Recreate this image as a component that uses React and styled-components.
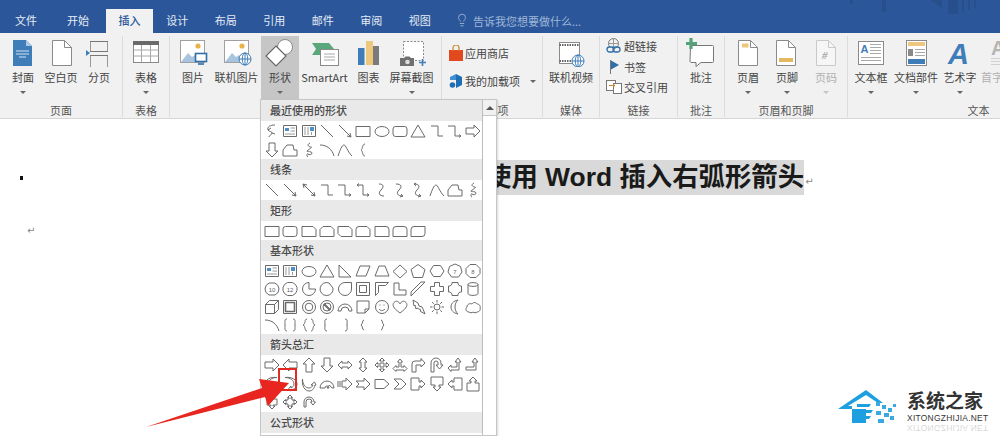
import styled, { createGlobalStyle } from 'styled-components';
import { Lightbulb } from 'lucide-react';

const GlobalStyle = createGlobalStyle`
  html, body { margin: 0; padding: 0; background: #fff; }
  body { font-family: "Liberation Sans", "Noto Sans CJK SC", sans-serif; }
`;

const cjk = `"Noto Sans CJK SC", "Liberation Sans", sans-serif`;

const Page = styled.div`
  position: relative;
  width: 1000px;
  height: 436px;
  overflow: hidden;
  display: flex;
  flex-direction: column;
  font-family: ${cjk};
`;

// title bar + tabs
const TabBar = styled.div`
  height: 33px;
  flex: none;
  display: flex;
  align-items: flex-end;
  padding-left: 2px;
  background: #2b579a;
  box-sizing: border-box;
`;

const Tab = styled.div`
  width: ${p => p.$w || 48.5}px;
  height: 24px;
  line-height: 22px;
  text-align: center;
  font-size: 11px;
  color: ${p => (p.$active ? '#2b579a' : '#e6ecf5')};
  background: ${p => (p.$active ? '#f1f1f1' : 'transparent')};
  font-weight: ${p => (p.$active ? 500 : 400)};
`;

const TellMe = styled.div`
  display: flex;
  align-items: center;
  gap: 4px;
  height: 24px;
  margin-left: 11px;
  font-size: 11px;
  color: #9fb6d8;
  svg { display: block; margin-bottom: 2px; }
`;

const BarArt = styled.svg`
  margin-left: auto;
  align-self: flex-start;
  display: block;
`;

// ribbon
const Ribbon = styled.div`
  height: 86px;
  flex: none;
  display: flex;
  background: #f1f1f1;
  border-bottom: 1px solid #d6d6d6;
  box-sizing: border-box;
`;

const Group = styled.div`
  flex: none;
  box-sizing: border-box;
  width: ${p => p.$w}px;
  height: 81px;
  margin-top: 3px;
  display: flex;
  flex-direction: column;
  border-right: 1px solid #dcdcdc;
`;

const Items = styled.div`
  height: 63px;
  display: flex;
  padding-left: ${p => p.$pad || 0}px;
`;

const GroupLabel = styled.div`
  margin-top: ${p => (p.$pushed ? 'auto' : '4px')};
  height: 14px;
  line-height: 14px;
  font-size: 11px;
  text-align: center;
  color: #555;
`;

const BigButton = styled.div`
  flex: none;
  width: ${p => p.$w}px;
  height: 63px;
  box-sizing: border-box;
  padding-top: 1px;
  display: flex;
  flex-direction: column;
  align-items: center;
  background: ${p => (p.$on ? '#c6c6c6' : 'transparent')};
  color: ${p => (p.$off ? '#b0b0b0' : '#444')};
  font-size: 11px;
  white-space: nowrap;
  span { line-height: 16px; height: 16px; margin-top: 2px; }
`;

const Caret = styled.i`
  display: block;
  width: 0;
  height: 0;
  margin-top: 6px;
  border: 3px solid transparent;
  border-top: 3px solid ${p => (p.$off ? '#c4c4c4' : '#666')};
  border-bottom: 0;
`;

const Icon = styled.svg`
  display: block;
  flex: none;
  width: 30px;
  height: 30px;
`;

const SmallColumn = styled.div`
  display: flex;
  flex-direction: column;
  padding: ${p => p.$top}px 0 0 ${p => p.$left}px;
`;

const SmallButton = styled.div`
  height: ${p => p.$h}px;
  display: flex;
  align-items: center;
  gap: 2px;
  font-size: 11px;
  color: #444;
  white-space: nowrap;
  svg { display: block; flex: none; }
  i { margin: 0 0 0 8px; }
`;

// document
const Doc = styled.div`
  flex: 1;
  background: #fff;
  padding-top: 41px;
`;

const TitleRow = styled.div`
  height: 35px;
  display: flex;
  align-items: center;
  padding-left: 20px;
`;

const Bullet = styled.i`
  width: 3px;
  height: 4px;
  background: #111;
  margin-right: 462px;
`;

const Title = styled.div`
  height: 35px;
  background: #d9d9d9;
  font: bold 26.4px/35px "Liberation Sans", "Noto Sans CJK SC", sans-serif;
  color: #1a1a1a;
  white-space: nowrap;
`;

const ReturnMark = styled.span`
  font-size: 10px;
  color: #888;
  font-family: "DejaVu Sans", sans-serif;
  margin-left: ${p => p.$left || 0}px;
`;

const TitleMark = styled(ReturnMark)`
  margin-top: 8px;
`;

const EmptyPara = styled.div`
  margin-top: 25px;
  padding-left: 27px;
  line-height: 14px;
`;

// shapes menu
const Menu = styled.div`
  position: absolute;
  left: 260px;
  top: 99px;
  width: 237px;
  height: 337px;
  box-sizing: border-box;
  display: flex;
  background: #fff;
  border: 1px solid #c6c6c6;
  box-shadow: 1px 1px 2px rgba(0, 0, 0, 0.15);
`;

const Gallery = styled.div`
  width: 221px;
  flex: none;
  border-right: 1px solid #bdbdbd;
`;

const Scroll = styled.div`
  flex: 1;
`;

const ScrollUp = styled.div`
  height: 15px;
  display: flex;
  align-items: center;
  justify-content: center;
  background: #f1f1f1;
  border-bottom: 1px solid #c6c6c6;
  &::before {
    content: '';
    border: 4px solid transparent;
    border-bottom: 4px solid #555;
    border-top: 0;
  }
`;

const SectionHead = styled.div`
  height: 21px;
  line-height: 21px;
  padding-left: 9px;
  background: #e9e9e9;
  font-size: 11px;
  font-weight: 500;
  color: #4a4a4a;
`;

const ShapeGrid = styled.div`
  display: grid;
  grid-template-columns: repeat(12, 18.3px);
  grid-auto-rows: ${p => p.$row || 18.5}px;
  padding: 1px 0 0 2px;
`;

const ShapeIcon = styled.svg`
  display: block;
  width: 16px;
  height: 16px;
  margin: 1px;
  fill: none;
  stroke: #6a6a6a;
  stroke-width: 1;
  stroke-linejoin: round;
`;

const RedBox = styled.div`
  position: absolute;
  left: 278px;
  top: 368px;
  width: 19px;
  height: 23px;
  box-sizing: border-box;
  border: 2px solid #e02a22;
`;

const RedArrow = styled.svg`
  position: absolute;
  left: 140px;
  top: 370px;
  display: block;
`;

// watermark
const Mark = styled.div`
  position: absolute;
  left: 838px;
  top: 388px;
  display: flex;
  gap: 5px;
  svg { display: block; flex: none; }
`;

const MarkText = styled.div`
  display: flex;
  flex-direction: column;
`;

const MarkName = styled.div`
  font-size: 19px;
  line-height: 24px;
  font-weight: 700;
  color: #333;
`;

const MarkUrl = styled.div`
  font: 8.4px/11px "Liberation Sans", sans-serif;
  letter-spacing: 0.3px;
  color: #333;
  white-space: nowrap;
  margin-top: 1px;
`;

const MarkEcho = styled(MarkUrl)`
  margin-top: -2px;
  transform: scaleY(-1);
  opacity: 0.2;
`;

/* ---- ribbon icons, 30x30 ---- */
const doc = 'M.5.5h12l7 7v18H.5z';

const CoverIcon = () => (
  <Icon viewBox="0 0 30 30">
    <path d="M5 3h13l6 6v20H5z" fill="#3f7db8" />
    <path d="M18 3l6 6h-6z" fill="#a9c9e6" />
    <path d="M8 14h13M8 17h13M11 20h7" stroke="#d5e4f2" fill="none" />
  </Icon>
);

const DocSheet = ({ x = 6, children, stroke = '#8a8a8a', fill = '#fff' }) => (
  <Icon viewBox="0 0 30 30">
    <g transform={`translate(${x} 3)`}>
      <path d={doc} fill={fill} stroke={stroke} />
      <path d="M12.5.5v7h7" fill="none" stroke={stroke} />
      {children}
    </g>
  </Icon>
);

const BlankIcon = () => <DocSheet />;

const BreakIcon = () => (
  <Icon viewBox="0 0 30 30">
    <path d="M6.5 4v10M23.5 4v10M6.5 18v12M23.5 18v12" stroke="#999" fill="none" />
    <path d="M6 4.5h18M6 14.5h18M6 18.5h18" stroke="#777" fill="none" />
    <path d="M2 13l4 3-4 3z" fill="#3f7db8" />
  </Icon>
);

const TableIcon = () => (
  <Icon viewBox="0 0 30 30">
    <rect x="2.5" y="4.5" width="25" height="21" fill="#fff" stroke="#8a8a8a" />
    <rect x="2" y="4" width="26" height="4" fill="#6a6a6a" />
    <path d="M2.5 13h25M2.5 19h25M10.5 8v17M19.5 8v17" stroke="#a8a8a8" fill="none" />
  </Icon>
);

const PictureBase = ({ children }) => (
  <Icon viewBox="0 0 30 30">
    <rect x="2.5" y="3.5" width="24" height="22" fill="#fff" stroke="#a0a0a0" />
    <circle cx="20" cy="9" r="2.6" fill="#eab34a" />
    <path d="M3 25l7-9 4 4 3-2 5 7z" fill="#a9c4de" />
    {children}
  </Icon>
);

const PictureIcon = () => (
  <PictureBase>
    <rect x="17.5" y="16.5" width="11" height="8" fill="#fff" stroke="#2f6ea8" strokeWidth="1.6" />
    <path d="M20 27h6" stroke="#2f6ea8" strokeWidth="1.6" />
  </PictureBase>
);

const Globe = ({ cx, cy, r }) => (
  <g fill="#fff" stroke="#3f7db8">
    <circle cx={cx} cy={cy} r={r} />
    <ellipse cx={cx} cy={cy} rx={r / 2.2} ry={r} fill="none" />
    <path d={`M${cx - r} ${cy}h${r * 2}M${cx} ${cy - r}v${r * 2}`} fill="none" />
  </g>
);

const OnlinePictureIcon = () => (
  <PictureBase>
    <Globe cx={23} cy={22} r={6} />
  </PictureBase>
);

const ShapesIcon = () => (
  <Icon viewBox="0 0 30 30">
    <circle cx="20" cy="10" r="7.5" fill="#fff" stroke="#8a8a8a" />
    <path d="M11 9l10 10-10 10L1 19z" fill="#fff" stroke="#666" strokeWidth="1.2" />
  </Icon>
);

const SmartArtIcon = () => (
  <Icon viewBox="0 0 30 30">
    <path d="M2 6h17l5 6-5 6H2l4-6z" fill="#5aa77b" />
    <rect x="10.5" y="12.5" width="18" height="16" fill="#fff" stroke="#8a8a8a" />
    <path d="M14 17h11M14 20h11M14 23h11" stroke="#a8a8a8" />
  </Icon>
);

const ChartIcon = () => (
  <Icon viewBox="0 0 30 30">
    <rect x="4" y="11" width="6.5" height="17" fill="#3f7db8" />
    <rect x="12" y="4" width="7" height="24" fill="#edc77b" />
    <rect x="19" y="9" width="6" height="19" fill="#7b7b7b" />
  </Icon>
);

const ScreenshotIcon = () => (
  <Icon viewBox="0 0 30 30">
    <rect x="6.5" y="4.5" width="20" height="19" fill="#fff" stroke="#8a8a8a" strokeDasharray="2 1.5" />
    <path d="M3 21h4l1.5-1.5h4L14 21h3v8H3z" fill="#6f6f6f" />
    <circle cx="10.5" cy="25" r="2.3" fill="#ddd" />
    <path d="M25.5 22v7M22 25.5h7" stroke="#3f7db8" strokeWidth="1.6" />
  </Icon>
);

const VideoIcon = () => (
  <Icon viewBox="0 0 30 30">
    <rect x="3.5" y="5.5" width="20" height="21" fill="#fff" stroke="#8a8a8a" />
    <path d="M3.5 8h20M3.5 24h20" stroke="#666" strokeWidth="2" strokeDasharray="1.5 1" />
    <Globe cx={22} cy={24} r={6} />
  </Icon>
);

const CommentIcon = () => (
  <Icon viewBox="0 0 30 30">
    <path d="M4.5 8.5h22a1 1 0 0 1 1 1v15a1 1 0 0 1-1 1H15l-5 4v-4H5a3 3 0 0 1-1-1z" fill="#fff" stroke="#777" />
    <path d="M5 1v11M0 6.5h11" stroke="#55a27a" strokeWidth="3.2" />
  </Icon>
);

const HeaderIcon = () => (
  <DocSheet x={5}>
    <rect x="4" y="3.5" width="6.5" height="4" fill="#edc77b" />
  </DocSheet>
);

const FooterIcon = () => (
  <DocSheet x={4}>
    <rect x="3" y="18" width="14" height="4" fill="#e3b860" />
  </DocSheet>
);

const PageNumberIcon = () => (
  <DocSheet x={5} stroke="#c9c9c9" fill="#f6f6f6">
    <text x="6" y="19" fontFamily="Liberation Serif" fontStyle="italic" fontWeight="700" fontSize="11" fill="#a8a8a8">#</text>
  </DocSheet>
);

const TextBoxIcon = () => (
  <Icon viewBox="0 0 30 30">
    <rect x="2.5" y="4.5" width="25" height="23" fill="#fff" stroke="#8a8a8a" />
    <text x="4.5" y="16" fontFamily="Liberation Sans" fontWeight="700" fontSize="11" fill="#3f7db8">A</text>
    <path d="M14 7.5h11M14 10.5h11M14 13.5h11M14 16.5h11M5 20.5h20M5 23.5h20" stroke="#a8a8a8" />
  </Icon>
);

const DocPartsIcon = () => (
  <Icon viewBox="0 0 30 30">
    <rect x="5.5" y="3.5" width="20" height="25" fill="#fff" stroke="#8a8a8a" />
    <rect x="7" y="5" width="17" height="4" fill="#edc77b" />
    <rect x="7" y="12" width="5" height="7" fill="#8a8a8a" />
    <path d="M14 12.5h10M14 15.5h10M14 18.5h10" stroke="#a8a8a8" />
    <rect x="7" y="22" width="17" height="5" fill="#3f7db8" />
  </Icon>
);

const WordArtIcon = () => (
  <Icon viewBox="0 0 30 30">
    <text x="3" y="27" fontFamily="Liberation Sans" fontStyle="italic" fontWeight="700" fontSize="29" fill="#3f7db8">A</text>
  </Icon>
);

const DropCapIcon = () => (
  <Icon viewBox="0 0 30 30">
    <text x="3" y="18" fontFamily="Liberation Sans" fontWeight="700" fontSize="20" fill="#b5b5b5">A</text>
    <path d="M3 21.5h24M3 24.5h24M3 27.5h24" stroke="#d0d0d0" />
  </Icon>
);

const StoreIcon = () => (
  <svg width="14" height="16" viewBox="0 0 14 16">
    <path d="M0 5h14v11H0z" fill="#e2491f" />
    <path d="M4 6V3a3 3 0 0 1 6 0v3" fill="none" stroke="#c9892e" strokeWidth="1.2" />
  </svg>
);

const AddinIcon = () => (
  <svg width="14" height="16" viewBox="0 0 14 16">
    <path d="M7 1l6 3v8l-6 3z" fill="#1f6db5" />
    <path d="M7 1L1 4v3h6z" fill="#3f8fd2" />
    <circle cx="3.5" cy="12" r="2.8" fill="#1f6db5" />
  </svg>
);

const LinkIcon = () => (
  <svg width="16" height="16" viewBox="0 0 16 16">
    <circle cx="7.5" cy="5.5" r="5" fill="none" stroke="#777" />
    <path d="M2.5 5.5h10M7.5.5v10" stroke="#999" />
    <rect x="1" y="9" width="7" height="5" rx="2.5" fill="#f1f1f1" stroke="#2f6ea8" strokeWidth="1.3" />
    <rect x="7" y="9" width="7" height="5" rx="2.5" fill="none" stroke="#2f6ea8" strokeWidth="1.3" />
  </svg>
);

const FlagIcon = () => (
  <svg width="16" height="16" viewBox="0 0 16 16">
    <path d="M4.5 1v14" stroke="#777" />
    <path d="M5 1.5l8 4.5-8 4.5z" fill="#2f6ea8" />
  </svg>
);

const CrossRefIcon = () => (
  <svg width="16" height="16" viewBox="0 0 16 16">
    <rect x=".5" y="1.5" width="9" height="10" fill="#fff" stroke="#777" />
    <rect x="7.5" y="4.5" width="8" height="10" fill="#fff" stroke="#777" />
    <path d="M3 6.5h6M7 5l2 1.5L7 8" stroke="#c9892e" fill="none" />
  </svg>
);

/* ---- gallery shapes, 16x16 ---- */
const p = (d, t) => <path d={d} transform={t} />;
const rot = a => `rotate(${a} 8 8)`;
const flip = 'matrix(-1 0 0 1 16 0)';
const numbered = (d, n) => (
  <>
    <path d={d} />
    <text x="8" y="10.5" textAnchor="middle" fontSize="6" fontFamily="Liberation Sans" fill="#666" stroke="none">{n}</text>
  </>
);

const ARROW = 'M1 5h8V2l6 6-6 6v-3H1z';
const CALLOUT = 'M1 2h8v4h2V4l4 4-4 4v-2H9v4H1z';
const CURVED = 'M13 1.5C7 1.5 4 5 4 8c0 2 1 3 3 4v-2l3 3.5L7 15v-1C3 13 1 11 1 8c0-4 5-7.5 12-6.5z';
const SWIRL = 'M3 13V8a5 5 0 0 1 10 0h1.5L12 11 9.5 8H11a3 3 0 0 0-6 0v5z';

const S = {
  hook: p('M11 2C6 2 3 4 4 7c1 2 4 1 4 3s-3 2-3 4M4 7l3-2M8 10l3 1'),
  textbox: (
    <>
      <rect x="1.5" y="2.5" width="13" height="11" />
      <path d="M3 5h4v3H3z" fill="#4f8ec9" stroke="none" />
      <path d="M8.5 5h4.5M8.5 8h4.5M3 11h10" stroke="#9a9a9a" />
    </>
  ),
  vtextbox: (
    <>
      <rect x="1.5" y="2.5" width="13" height="11" />
      <path d="M9 4h4v4H9z" fill="#4f8ec9" stroke="none" />
      <path d="M4 4v8M7 4v8M10.5 9v3" stroke="#9a9a9a" />
    </>
  ),
  line: p('M2 2l12 12'),
  lineArrow: p('M2 2l12 12M14 14l-1-4M14 14l-4-1'),
  lineDouble: p('M2 2l12 12M14 14l-1-4M14 14l-4-1M2 2l1 4M2 2l4 1'),
  rect: <rect x="1" y="3.5" width="14" height="10" />,
  oval: <ellipse cx="8" cy="8.5" rx="7" ry="5" />,
  round: <rect x="1" y="3.5" width="14" height="10" rx="2.5" />,
  tri: p('M8 2l7 12H1z'),
  elbow: p('M2 3h7v10h5'),
  elbowArrow: p('M1 3h7v10h6M14 13l-2-1.5M14 13l-2 1.5'),
  elbowDouble: p('M2 3h6v10h6M14 13l-2-1.5M14 13l-2 1.5M2 3l2-1.5M2 3l2 1.5'),
  right: p(ARROW),
  left: p(ARROW, rot(180)),
  up: p(ARROW, rot(-90)),
  down: p(ARROW, rot(90)),
  freeform: p('M1 14V8l4-5h6l1 5h3v6z'),
  scribble: p('M9 1C5 3 8 5 10 5S7 8 6 9s5 0 5 2-3 2-4 1-2 2 0 3'),
  arc: p('M1 3c7 0 12 4 14 11'),
  curve: p('M1 14C3 8 5 3 7 3s3 6 8 11'),
  brace: p('M10 2C7 2 8 7 6 8c2 1 1 6 4 6'),
  curveConn: p('M5 2c5 0 5 3 2 6s-2 6 3 6'),
  curveArrow: p('M4 2c6 0 6 3 3 6s-2 6 4 6M11 14l-2-2M11 14l-3 1'),
  curveDouble: p('M4 2c6 0 6 3 3 6s-2 6 4 6M11 14l-2-2M11 14l-3 1M4 2l2-1M4 2l2 2'),
  snip1: p('M1 3.5h11l3 3v7H1z'),
  snip2: p('M4 3.5h8l3 3v7H1v-7z'),
  snipDiag: p('M1 3.5h11l3 3v7H4l-3-3z'),
  roundSnip: p('M4 3.5h8l3 3v7H1v-7a3 3 0 0 1 3-3z'),
  round1: p('M1 3.5h11a3 3 0 0 1 3 3v7H1z'),
  round2: p('M4 3.5h8a3 3 0 0 1 3 3v7H1v-7a3 3 0 0 1 3-3z'),
  roundDiag: p('M4 3.5h11v7a3 3 0 0 1-3 3H1v-7a3 3 0 0 1 3-3z'),
  rtTri: p('M2 2l12 12H2z'),
  para: p('M5 3h10l-4 10H1z'),
  trap: p('M5 3h6l4 10H1z'),
  diamond: p('M8 2l7 6.5L8 15 1 8.5z'),
  penta: p('M8 1.5l7 5-2.5 8h-9L1 6.5z'),
  hexa: p('M4.5 2.5h7L15 8l-3.5 5.5h-7L1 8z'),
  hepta: numbered('M8 1l5.5 2.5L15 9l-3.5 5h-7L1 9l1.500-5.500z', '7'),
  octa: numbered('M5 1.5h6L15 5.500v5L11 14.500H5L1 10.500v-5z', '8'),
  deca: numbered('M5 2h6l3 2.500L15 8l-1 3.500L11 14H5l-3-2.500L1 8l1-3.500z', '10'),
  dodeca: numbered('M5.500 1.500h5l3 2 1.500 3v3l-1.500 3-3 2h-5l-3-2L1 9.500v-3l1.500-3z', '12'),
  pie: p('M8 1.500A6.500 6.500 0 1 0 14.500 8H8z'),
  chord: p('M10 2a6.500 6.500 0 1 0 4 5L10 2z'),
  tear: p('M14.500 1.500v6.500A6.500 6.500 0 1 1 8 1.500z'),
  frame: (
    <>
      <rect x="1.5" y="1.5" width="13" height="13" />
      <rect x="4.5" y="4.5" width="7" height="7" />
    </>
  ),
  halfFrame: p('M1.500 1.500h13l-3 3h-7v7l-3 3z'),
  ell: p('M2 2h5v7h7v5H2z'),
  stripe: p('M1 15l0-4L11 1h4z'),
  cross: p('M5.500 1.500h5v4h4v5h-4v4h-5v-4h-4v-5h4z'),
  plaque: p('M5 1.500h6a3 3 0 0 0 3.500 3.500v6A3 3 0 0 0 11 14.500H5A3 3 0 0 0 1.500 11V5A3 3 0 0 0 5 1.500z'),
  can: p('M3 3.500c0-2.500 10-2.500 10 0v9c0 2.500-10 2.500-10 0zM3 3.500c0 2.500 10 2.500 10 0'),
  cube: p('M1.500 5.500l4-4h9v9l-4 4h-9zM1.500 5.500h9v9M10.500 5.500l4-4'),
  bevel: (
    <>
      <rect x="1.5" y="1.5" width="13" height="13" />
      <rect x="3.5" y="3.5" width="9" height="9" strokeWidth="1.6" />
    </>
  ),
  donut: (
    <>
      <circle cx="8" cy="8" r="6.5" />
      <circle cx="8" cy="8" r="3.8" />
    </>
  ),
  noSign: (
    <>
      <circle cx="8" cy="8" r="6.5" />
      <circle cx="8" cy="8" r="4" />
      <path d="M5 5l6 6" strokeWidth="2" />
    </>
  ),
  blockArc: p('M1 12a7 7 0 0 1 14 0h-3a4 4 0 0 0-8 0z'),
  folded: p('M2 2h12v8l-4 4H2zM14 10h-4v4'),
  smile: (
    <>
      <circle cx="8" cy="8" r="6.5" />
      <path d="M5 10c2 2 4 2 6 0M5.500 6h1M9.500 6h1" />
    </>
  ),
  heart: p('M8 14C1 9 0 6 2 3.500s5-1 6 1.500c1-2.500 4-4 6-1.500s1 5.500-6 10.500z'),
  bolt: p('M3 1l5 3 1 3 3 1 1 2 2 5-5-3 1-1-4-2-1 1-1-4-1 1z'),
  sun: (
    <>
      <circle cx="8" cy="8" r="3" />
      <path d="M8 1v2.500M8 12.500V15M1 8h2.500M12.500 8H15M3 3l1.800 1.800M11.200 11.200L13 13M13 3l-1.800 1.800M4.800 11.200L3 13" />
    </>
  ),
  moon: p('M11 1C6 2 4 5 4 8s2 6 7 7c-2-2-3-4-3-7s1-5 3-7z'),
  cloud: p('M4 13c-3 0-4-3-2-5 0-3 3-4 5-3 1-2 4-2 5 0 2 0 4 2 3 4 1 2-1 4-3 4-1 1-3 1-4 0-1 1-3 1-4 0z'),
  brackets: p('M5 2C2.500 2 3 4 3 8s-.5 6 2 6M11 2c2.500 0 2 2 2 6s.5 6-2 6'),
  braces: p('M6 2C3 2 5 7 2 8c3 1 1 6 4 6M10 2c3 0 1 5 4 6-3 1-1 6-4 6'),
  lBracket: p('M8 2C5 2 6 5 6 8s-1 6 2 6'),
  rBracket: p('M8 2c3 0 2 3 2 6s1 6-2 6'),
  lBrace: p('M9 3C7 3 8 7 6 8c2 1 1 5 3 5'),
  rBrace: p('M7 3c2 0 1 4 3 5-2 1-1 5-3 5'),
  lr: p('M1 8l4-4v2h6V4l4 4-4 4v-2H5v2z'),
  ud: p('M1 8l4-4v2h6V4l4 4-4 4v-2H5v2z', rot(90)),
  quad: p('M8 1l2.500 2.500H9V7h3.500V5.500L15 8l-2.500 2.500V9H9v3.500h1.500L8 15l-2.500-2.500H7V9H3.500v1.500L1 8l2.500-2.500V7H7V3.500H5.500z'),
  lru: p('M8 2l2.500 3H9v5h3V8.500l3 3-3 3V13H4v1.500l-3-3 3-3V10h3V5H5.500z'),
  bent: p('M2 15V7a3 3 0 0 1 3-3h6V1.500L15 6l-4 4V8H6v7z'),
  uturn: p('M2 15V6a5 5 0 0 1 10 0v2h2l-3.500 4L7 8h2V6a2 2 0 0 0-4 0v9z'),
  leftUp: p('M1 11l3-3v2h6V5H8l3-4 3 4h-2v8H4v1.500z'),
  bentUp: p('M1 10h8V5H7l3-4 3 4h-2v8H1z'),
  curvedL: p(CURVED),
  curvedR: p(CURVED, flip),
  curvedU: p(CURVED, 'rotate(-90 8 8)'),
  curvedD: p('M1 12a7 7 0 0 1 14 0h-2l-2.500-3L8 12h2a2 2 0 0 0-4 0H3z'),
  striped: p('M1 5v6M3 5v6M5 5h4V2l6 6-6 6v-3H5z'),
  notched: p('M1 5h8V2l6 6-6 6v-3H1l3-3z'),
  home: p('M1 3.500h9l5 4.500-5 4.500H1z'),
  chevron: p('M2 3h7l5 5-5 5H2l5-5z'),
  cRight: p(CALLOUT),
  cDown: p(CALLOUT, rot(90)),
  cLeft: p(CALLOUT, rot(180)),
  cUp: p(CALLOUT, rot(-90)),
  cUd: p('M1 8l3-3v2h1V3h6v4h1V5l3 3-3 3V9h-1v4H5V9H4v2z', rot(90)),
  cQuad: p('M8 1l2.500 2.500H9V5h2v2h1.500V5.500L15 8l-2.500 2.500V9H11v2H9v1.500h1.500L8 15l-2.500-2.500H7V11H5V9H3.500v1.500L1 8l2.500-2.500V7H5V5h2V3.500H5.500z'),
  swirl: p(SWIRL),
};

const SECTIONS = [
  {
    title: '最近使用的形状',
    shapes: ['hook', 'textbox', 'vtextbox', 'line', 'lineArrow', 'rect', 'oval', 'round', 'tri', 'elbow', 'elbowArrow', 'right', 'down', 'freeform', 'scribble', 'arc', 'curve', 'brace'],
  },
  {
    title: '线条',
    shapes: ['line', 'lineArrow', 'lineDouble', 'elbow', 'elbowArrow', 'elbowDouble', 'curveConn', 'curveArrow', 'curveDouble', 'curve', 'freeform', 'scribble'],
  },
  {
    title: '矩形',
    shapes: ['rect', 'round', 'snip1', 'snip2', 'snipDiag', 'roundSnip', 'round1', 'round2', 'roundDiag'],
  },
  {
    title: '基本形状',
    row: 18,
    shapes: [
      'textbox', 'vtextbox', 'oval', 'tri', 'rtTri', 'para', 'trap', 'diamond', 'penta', 'hexa', 'hepta', 'octa',
      'deca', 'dodeca', 'pie', 'chord', 'tear', 'frame', 'halfFrame', 'ell', 'stripe', 'cross', 'plaque', 'can',
      'cube', 'bevel', 'donut', 'noSign', 'blockArc', 'folded', 'smile', 'heart', 'bolt', 'sun', 'moon', 'cloud',
      'arc', 'brackets', 'braces', 'lBracket', 'rBracket', 'lBrace', 'rBrace',
    ],
  },
  {
    title: '箭头总汇',
    shapes: [
      'right', 'left', 'up', 'down', 'lr', 'ud', 'quad', 'lru', 'bent', 'uturn', 'leftUp', 'bentUp',
      'curvedL', 'curvedR', 'curvedU', 'curvedD', 'striped', 'notched', 'home', 'chevron', 'cRight', 'cDown', 'cLeft', 'cUp',
      'cUd', 'cQuad', 'swirl',
    ],
  },
  { title: '公式形状', shapes: [] },
];

const Big = ({ icon: I, label, w, caret, on, off }) => (
  <BigButton $w={w} $on={on} $off={off}>
    <I />
    <span>{label}</span>
    {caret && <Caret $off={off} />}
  </BigButton>
);

export default function App() {
  const tabs = ['设计', '布局', '引用', '邮件', '审阅', '视图'];
  return (
    <Page>
      <GlobalStyle />
      <TabBar>
        <Tab $w={48}>文件</Tab>
        <Tab $w={56}>开始</Tab>
        <Tab $w={47} $active>插入</Tab>
        {tabs.map(t => <Tab key={t}>{t}</Tab>)}
        <TellMe>
          <Lightbulb size={14} strokeWidth={1.5} />
          告诉我您想要做什么...
        </TellMe>
        <BarArt width="160" height="16" viewBox="0 0 160 16">
          <path d="M10 0h3v4h-3zM42 0h4v12h-4zM90 0l12 8v-8zM108 0h10v14h-10zM122 0h2v12h-2zM128 0h2v10h-2zM134 0h2v8h-2z" fill="#264f8c" />
        </BarArt>
      </TabBar>

      <Ribbon>
        <Group $w={123}>
          <Items $pad={4}>
            <Big icon={CoverIcon} label="封面" w={38} caret />
            <Big icon={BlankIcon} label="空白页" w={38} />
            <Big icon={BreakIcon} label="分页" w={38} />
          </Items>
          <GroupLabel>页面</GroupLabel>
        </Group>
        <Group $w={47}>
          <Items>
            <Big icon={TableIcon} label="表格" w={46} caret />
          </Items>
          <GroupLabel>表格</GroupLabel>
        </Group>
        <Group $w={272}>
          <Items $pad={4}>
            <Big icon={PictureIcon} label="图片" w={38} />
            <Big icon={OnlinePictureIcon} label="联机图片" w={49} />
            <Big icon={ShapesIcon} label="形状" w={38} caret on />
            <Big icon={SmartArtIcon} label="SmartArt" w={51} />
            <Big icon={ChartIcon} label="图表" w={37} />
            <Big icon={ScreenshotIcon} label="屏幕截图" w={49} caret />
          </Items>
        </Group>
        <Group $w={101}>
          <SmallColumn $top={3} $left={7}>
            <SmallButton $h={28}><StoreIcon />应用商店</SmallButton>
            <SmallButton $h={28}><AddinIcon />我的加载项<Caret /></SmallButton>
          </SmallColumn>
          <GroupLabel $pushed>加载项</GroupLabel>
        </Group>
        <Group $w={57}>
          <Items>
            <Big icon={VideoIcon} label="联机视频" w={56} />
          </Items>
          <GroupLabel>媒体</GroupLabel>
        </Group>
        <Group $w={78}>
          <SmallColumn $top={0} $left={6}>
            <SmallButton $h={20.5}><LinkIcon />超链接</SmallButton>
            <SmallButton $h={20.5}><FlagIcon />书签</SmallButton>
            <SmallButton $h={20.5}><CrossRefIcon />交叉引用</SmallButton>
          </SmallColumn>
          <GroupLabel $pushed>链接</GroupLabel>
        </Group>
        <Group $w={47}>
          <Items>
            <Big icon={CommentIcon} label="批注" w={46} />
          </Items>
          <GroupLabel>批注</GroupLabel>
        </Group>
        <Group $w={123}>
          <Items $pad={4}>
            <Big icon={HeaderIcon} label="页眉" w={38} caret />
            <Big icon={FooterIcon} label="页脚" w={40} caret />
            <Big icon={PageNumberIcon} label="页码" w={38} caret off />
          </Items>
          <GroupLabel>页眉和页脚</GroupLabel>
        </Group>
        <Group $w={262}>
          <Items $pad={2}>
            <Big icon={TextBoxIcon} label="文本框" w={42} caret />
            <Big icon={DocPartsIcon} label="文档部件" w={48} caret />
            <Big icon={WordArtIcon} label="艺术字" w={40} caret />
            <Big icon={DropCapIcon} label="首字下沉" w={46} caret off />
          </Items>
          <GroupLabel>文本</GroupLabel>
        </Group>
      </Ribbon>

      <Doc>
        <TitleRow>
          <Bullet />
          <Title>使用 Word 插入右弧形箭头</Title>
          <TitleMark $left={1}>↵</TitleMark>
        </TitleRow>
        <EmptyPara><ReturnMark>↵</ReturnMark></EmptyPara>
      </Doc>

      <Menu>
        <Gallery>
          {SECTIONS.map(section => (
            <div key={section.title}>
              <SectionHead>{section.title}</SectionHead>
              {section.shapes.length > 0 && (
                <ShapeGrid $row={section.row}>
                  {section.shapes.map((name, i) => (
                    <ShapeIcon key={i} viewBox="0 0 16 16">{S[name]}</ShapeIcon>
                  ))}
                </ShapeGrid>
              )}
            </div>
          ))}
        </Gallery>
        <Scroll>
          <ScrollUp />
        </Scroll>
      </Menu>

      <RedBox />
      <RedArrow width="160" height="62" viewBox="0 0 160 62">
        <path d="M6 57L122 18l-3-9 30 4-21 23-3-9z" fill="#e8261f" />
      </RedArrow>

      <Mark>
        <svg width="64" height="38" viewBox="0 0 64 38">
          <path d="M0 21L28 2l17 13-5 0-12-8L10 18h4v17h14V21H14" fill="#1d9fe0" />
          <path d="M19 16h14l-2 3H19zM19 22h16l-2 3H19zM19 28h14l-2 3H19z" fill="#1d9fe0" />
          <path d="M38 14h4v4h-4zM44 17h4v4h-4zM50 20h4v4h-4zM38 23h5v4h-5zM46 25h5v4h-5zM55 16h3v3h-3zM40 31h6v4h-6zM52 28h4v4h-4z" fill="#3aa9e2" />
        </svg>
        <MarkText>
          <MarkName>系统之家</MarkName>
          <MarkUrl>XITONGZHIJIA.NET</MarkUrl>
          <MarkEcho aria-hidden="true">XITONGZHIJIA.NET</MarkEcho>
        </MarkText>
      </Mark>
    </Page>
  );
}
